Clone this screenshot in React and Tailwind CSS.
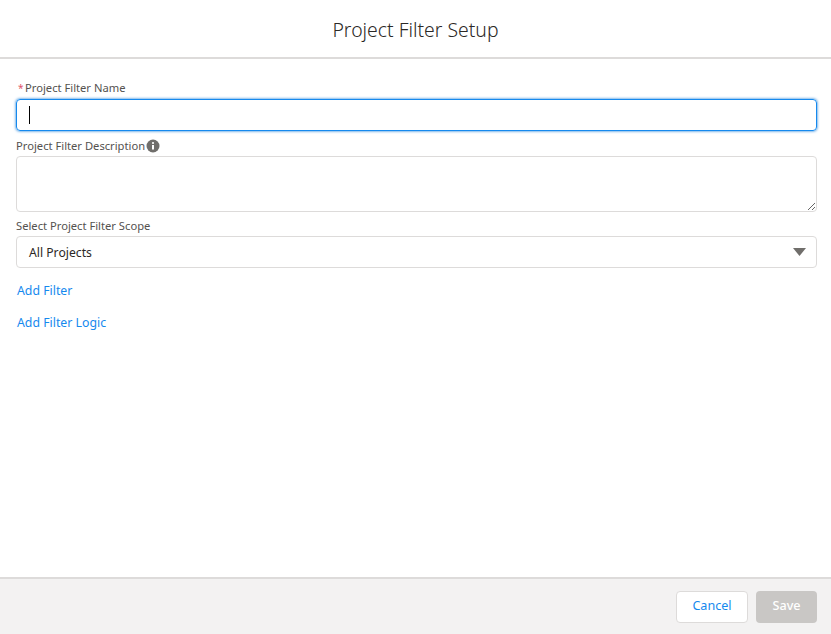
import { useState } from "react";

export default function App() {
  const [name, setName] = useState("");

  return (
    <div className="w-[831px] h-[634px] flex flex-col bg-white text-[11.2px] font-['Noto_Sans',sans-serif] overflow-hidden">
      <div className="h-[59px] shrink-0 flex items-center justify-center border-b-2 border-[#dddbda]">
        <h1 className="text-[19.4px] text-[#2b2826] font-light pt-[3px]">Project Filter Setup</h1>
      </div>

      <div className="flex-1 pl-4 pr-[14px] pt-[21px] text-[#54524f]">
        <label className="flex items-center h-[19px] pb-[2px]">
          <span className="text-[#e0556a] text-[10px] ml-[2px] mr-[3px] w-[4px]">*</span>Project Filter Name
        </label>
        <div className="h-[32px] rounded border border-[#1589ee] shadow-[0_0_3px_#0070d2] flex items-center pl-[12px]">
          <span className="w-px h-[18px] bg-black" />
          <input
            className="flex-1 outline-none text-[13px]"
            value={name}
            onChange={(e) => setName(e.target.value)}
          />
        </div>

        <label className="mt-[5px] h-[20px] flex items-center gap-px">
          Project Filter Description
          <svg width="14" height="14" viewBox="0 0 14 14">
            <circle cx="7" cy="7" r="6.5" fill="#706e6b" />
            <rect x="6" y="6" width="2" height="4.5" fill="#fff" />
            <circle cx="7" cy="4" r="1.1" fill="#fff" />
          </svg>
        </label>
        <textarea className="block w-full h-[56px] rounded border border-[#dddbda] outline-none" />

        <label className="block mt-[5px] h-[19px] leading-[18px]">Select Project Filter Scope</label>
        <div className="h-[32px] rounded border border-[#dddbda] flex items-center justify-between pl-3 pr-[10px] text-[12.2px] text-[#2b2826]">
          <span className="pt-[2px]">All Projects</span>
          <svg width="13" height="8" viewBox="0 0 13 8">
            <path d="M0 0h13L6.5 8z" fill="#706e6b" />
          </svg>
        </div>

        <div className="mt-[14px] text-[12.3px] text-[#1589ee] leading-[17px] pl-px">Add Filter</div>
        <div className="mt-[15px] text-[12.3px] text-[#1589ee] leading-[17px] pl-px">Add Filter Logic</div>
      </div>

      <div className="h-[57px] shrink-0 bg-[#f3f2f2] border-t-2 border-[#dddbda] flex items-center justify-end gap-2 px-[14px] text-[12.6px]">
        <button className="h-[32px] w-[72px] rounded border border-[#dddbda] bg-white text-[#1589ee]">Cancel</button>
        <button className="h-[32px] w-[61px] rounded bg-[#c9c7c5] text-white font-medium">Save</button>
      </div>
    </div>
  );
}
